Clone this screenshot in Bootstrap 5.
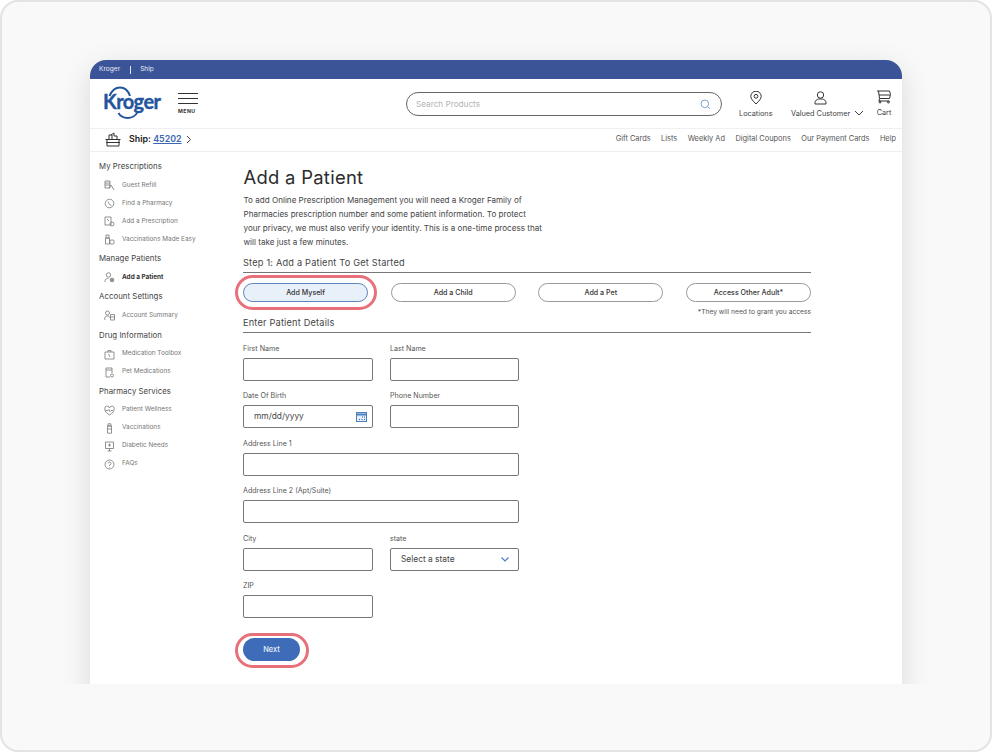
<!doctype html>
<html lang="en">
<head>
<meta charset="utf-8">
<title>Add a Patient</title>
<link href="https://cdn.jsdelivr.net/npm/bootstrap@5.3.0/dist/css/bootstrap.min.css" rel="stylesheet">
<style>
html,body{margin:0;width:992px;height:752px;overflow:hidden;background:#fff}
body{font-family:Inter,"Liberation Sans",sans-serif;color:#333}
.stage{height:752px;background:#f9f9f9;border:2px solid #e3e3e3;border-radius:18px;overflow:hidden}
.clipper{height:682px;overflow:hidden;padding:58px 88px 0}
.panel{width:812px;height:640px;background:#fff;border-radius:16px 16px 0 0;box-shadow:0 8px 30px rgba(0,0,0,.13)}
.topstrip{height:19px;background:#3a5497;border-radius:16px 16px 0 0;color:#e8edf7;font-size:6.6px;padding:1px 0 0 9px}
.topstrip .sep{width:1px;height:8px;background:#dfe6f5;margin:0 9px 0 10px}
.mainhead{height:50px;border-bottom:1px solid #f0f0f0;position:relative}
.logo-slot{margin-left:13px;width:60px;height:36px}
.logoword{stroke:#24559c;stroke-width:.35px}
.burger{margin-left:15px;width:20px}
.burger i{display:block;height:1.4px;background:#333;margin-bottom:3.8px}
.burger span{display:block;font-size:5.2px;font-weight:700;line-height:6px;color:#333;letter-spacing:.45px;margin-top:1px}
.searchbox{position:absolute;left:316px;top:13px;width:316px;height:24px;border:1px solid #666;border-radius:12px;padding:0 10px 0 9px;font-size:8.2px;color:#b4b4b4}
.tool{position:absolute;top:12px;text-align:center;font-size:7.3px;color:#444;line-height:10px;white-space:nowrap}
.tool svg.glyph{display:block;margin:0 auto 4px}
.toolmenu{position:absolute;left:calc(100% + 4px);top:19px}
.subhead{height:23px;border-bottom:1px solid #eee;padding:0 6px 2px 15px}
.shipto{font-size:8.9px;font-weight:600;color:#222;margin-left:8px}
.shipto a{color:#3c68b3;font-weight:600}
.quick{gap:10.5px;font-size:7.4px;color:#555}
.bodyrow{padding-left:9px}
.sidecol{width:144px;padding-top:8px}
.sidehead{font-size:7.8px;line-height:12px;color:#444;margin-bottom:4.5px;letter-spacing:.05px}
.sideitem{height:18px;font-size:6.4px;color:#777;padding-left:5px;gap:7px}
.sideitem svg{flex:none}
.sideitem.on{font-weight:700;color:#333}
.sidegroup{margin-bottom:3.7px}
.maincol{width:568px}
.pagetitle{font-size:18.4px;font-weight:400;color:#2c2c2c;line-height:24px;margin:13px 0 4px .5px;letter-spacing:.3px}
.intro{font-size:8.1px;line-height:14px;color:#444;width:300px;margin:0 0 7px .5px}
.stephead{font-size:9.2px;line-height:14px;color:#444;padding-bottom:2px;border-bottom:1px solid #777;letter-spacing:.2px}
.choices{margin-top:10px}
.pickbtn{width:125px;height:19px;padding:0;font-size:7.1px;font-weight:500;line-height:17px;color:#333;background:#fff;border:1px solid #999;border-radius:10px}
.pickbtn.sel{background:#e8f0fa;border-color:#5d84bd;position:relative}
.pickbtn.sel::after{content:"";position:absolute;inset:-9px -10px -9px -9px;border:3.5px solid #e8707a;border-radius:18px}
.grantnote{font-size:6.7px;line-height:10px;color:#555;text-align:right;margin-top:5px}
.detailhead{margin-top:-1px;margin-bottom:11px}
.fieldlabel{display:block;font-size:7.1px;line-height:10px;color:#555;margin:0 0 4px}
.fieldrow{gap:17px;margin-bottom:10.4px}
.fieldbox{width:130px}
.fieldbox.wide{width:276px}
.fieldbox.alt{width:129px}
.inputline{display:block;width:100%;height:23px;border:1px solid #777;border-radius:2px;padding:0 5px 0 10px;font-size:8.4px;line-height:21px;background:#fff;color:#444}
.nextbtn{position:relative;width:57px;height:23px;padding:0;margin-top:10px;background:#3e6cb8;color:#e9effa;border:0;border-radius:12px;font-size:7.4px;font-weight:500}
.nextbtn::after{content:"";position:absolute;inset:-5px -9px -7px -8px;border:3.5px solid #e8707a;border-radius:18px}
</style>
</head>
<body>
<div class="stage"><div class="clipper"><div class="panel">

<div class="topstrip d-flex align-items-center"><span>Kroger</span><span class="sep"></span><span>Ship</span></div>

<div class="mainhead d-flex align-items-center">
  <div class="logo-slot">
    <svg width="60" height="36" viewBox="0 0 60 36">
      <text class="logoword" x="0" y="23" font-family="Lato,sans-serif" font-weight="700" font-size="20" fill="#24559c" textLength="58">Kroger</text>
      <path d="M6.500 10C9 4 13 1.500 17 1.500S25 4 27 10" fill="none" stroke="#24559c" stroke-width="2"/>
      <path d="M35 25C33 30 28 32 24.500 32S17 30 15.500 27" fill="none" stroke="#24559c" stroke-width="2"/>
    </svg>
  </div>
  <div class="burger"><i></i><i></i><i></i><span>MENU</span></div>
  <div class="searchbox d-flex align-items-center justify-content-between"><span>Search Products</span>
    <svg width="11" height="11" viewBox="0 0 11 11" fill="none" stroke="#7fa3d2" stroke-width="1"><circle cx="4.800" cy="4.800" r="3.800"/><path d="M7.600 7.600 10 10"/></svg>
  </div>
  <div class="tool" style="left:649px">
    <svg class="glyph" width="12" height="14" viewBox="0 0 12 14" fill="none" stroke="#333" stroke-width="1"><path d="M6 13C3 10 .8 7.800.8 5.400a5.200 5.200 0 0 1 10.400 0C11.200 7.800 9 10 6 13Z"/><circle cx="6" cy="5.300" r="1.900"/></svg>
    Locations
  </div>
  <div class="tool" style="left:701px">
    <svg class="glyph" width="13" height="14" viewBox="0 0 13 14" fill="none" stroke="#333" stroke-width="1"><circle cx="6.500" cy="4" r="3.200"/><path d="M1 13v-1.500C1 9.500 3 8.500 4.500 8h4c1.500.5 3.500 1.500 3.500 3.500V13Z"/></svg>
    Valued Customer
    <svg class="toolmenu" width="10" height="6" viewBox="0 0 10 6" fill="none" stroke="#444" stroke-width="1"><path d="M1 1l4 4 4-4"/></svg>
  </div>
  <div class="tool" style="left:786px;top:11px">
    <svg class="glyph" width="16" height="14" viewBox="0 0 16 14" fill="none" stroke="#333" stroke-width="1"><path d="M1 1h12.500l1 3.500-1 4H3.500L2.500 1"/><path d="M3 5h11"/><path d="M3.500 8.500 3 11h10"/><circle cx="4" cy="12" r="1"/><circle cx="12.500" cy="12" r="1"/></svg>
    Cart
  </div>
</div>

<div class="subhead d-flex align-items-center justify-content-between">
  <div class="d-flex align-items-center">
    <svg width="16" height="15" viewBox="0 0 16 15" fill="none" stroke="#333" stroke-width="1"><path d="M.5 7.500h15M2 7.500V14h12V7.500M1 10.500h14"/><path d="M4 7V3h3v4M6 3 9 1v3h3v3"/></svg>
    <span class="shipto">Ship: <a href="#">45202</a></span>
    <svg class="ms-1" width="6" height="9" viewBox="0 0 6 9" fill="none" stroke="#444" stroke-width="1"><path d="M1 1l3.500 3.500L1 8"/></svg>
  </div>
  <div class="quick d-flex"><span>Gift Cards</span><span>Lists</span><span>Weekly Ad</span><span>Digital Coupons</span><span>Our Payment Cards</span><span>Help</span></div>
</div>

<div class="bodyrow d-flex">
  <nav class="sidecol">
    <div class="sidegroup">
      <div class="sidehead">My Prescriptions</div>
      <div class="sideitem d-flex align-items-center"><svg width="11" height="11" viewBox="0 0 11 11" fill="none" stroke="#777" stroke-width=".8"><path d="M1 1h5v7H1ZM1 3h5M1 5h5"/><path d="M5 8l2-3 3 5"/></svg>Guest Refill</div>
      <div class="sideitem d-flex align-items-center"><svg width="11" height="11" viewBox="0 0 11 11" fill="none" stroke="#777" stroke-width=".8"><circle cx="5.500" cy="5.500" r="4.300"/><path d="M4 3.500l1.500 3 2 1"/></svg>Find a Pharmacy</div>
      <div class="sideitem d-flex align-items-center"><svg width="11" height="11" viewBox="0 0 11 11" fill="none" stroke="#777" stroke-width=".8"><path d="M1 1h6v8H1ZM3 3l2 2"/><circle cx="8" cy="8" r="2"/></svg>Add a Prescription</div>
      <div class="sideitem d-flex align-items-center"><svg width="11" height="11" viewBox="0 0 11 11" fill="none" stroke="#777" stroke-width=".8"><path d="M2 1h3v3H2ZM1.500 4h4v6h-4Z"/><rect x="6" y="6" width="4" height="4" rx="1"/></svg>Vaccinations Made Easy</div>
    </div>
    <div class="sidegroup">
      <div class="sidehead">Manage Patients</div>
      <div class="sideitem on d-flex align-items-center"><svg width="11" height="11" viewBox="0 0 11 11" fill="none" stroke="#777" stroke-width=".8"><circle cx="4.500" cy="3" r="2.200"/><path d="M1 10V8.500C1 7 3 6.500 4.500 6.500"/><circle cx="8" cy="8" r="1.800" fill="#999"/></svg>Add a Patient</div>
    </div>
    <div class="sidegroup">
      <div class="sidehead">Account Settings</div>
      <div class="sideitem d-flex align-items-center"><svg width="11" height="11" viewBox="0 0 11 11" fill="none" stroke="#777" stroke-width=".8"><circle cx="3.500" cy="3" r="2"/><path d="M.800 10V8C.800 7 2 6 3.500 6S6 7 6 8"/><path d="M6.500 4.500h4v5.500h-4ZM6.500 7h4"/></svg>Account Summary</div>
    </div>
    <div class="sidegroup">
      <div class="sidehead">Drug Information</div>
      <div class="sideitem d-flex align-items-center"><svg width="11" height="11" viewBox="0 0 11 11" fill="none" stroke="#777" stroke-width=".8"><path d="M1 3h9v7H1ZM4 3V1.500h3V3M4.500 5l1.500 3"/></svg>Medication Toolbox</div>
      <div class="sideitem d-flex align-items-center"><svg width="11" height="11" viewBox="0 0 11 11" fill="none" stroke="#777" stroke-width=".8"><path d="M2 1h6v2H2ZM2 3v7h4M8 3v3"/><circle cx="8" cy="8.500" r="1.500"/></svg>Pet Medications</div>
    </div>
    <div class="sidegroup">
      <div class="sidehead">Pharmacy Services</div>
      <div class="sideitem d-flex align-items-center"><svg width="11" height="11" viewBox="0 0 11 11" fill="none" stroke="#777" stroke-width=".8"><path d="M5.500 10C2 8 .8 6 .8 4a2.400 2.400 0 0 1 4.700-1 2.400 2.400 0 0 1 4.700 1c0 2-1.200 4-4.700 6Z"/><path d="M1.500 5.500h2.500l1-1 1 2 1-1h2"/></svg>Patient Wellness</div>
      <div class="sideitem d-flex align-items-center"><svg width="11" height="11" viewBox="0 0 11 11" fill="none" stroke="#777" stroke-width=".8"><path d="M4 .8h3V3H4ZM3.500 3h4v7.200h-4ZM3.500 6h4"/></svg>Vaccinations</div>
      <div class="sideitem d-flex align-items-center"><svg width="11" height="11" viewBox="0 0 11 11" fill="none" stroke="#777" stroke-width=".8"><path d="M1.500 1h8v6.500h-8ZM3.500 10h4M5.500 7.500V10M5.500 2.500v3M4 4h3"/></svg>Diabetic Needs</div>
      <div class="sideitem d-flex align-items-center"><svg width="11" height="11" viewBox="0 0 11 11" fill="none" stroke="#777" stroke-width=".8"><circle cx="5.500" cy="5.500" r="4.500"/><path d="M4 4.300a1.500 1.500 0 1 1 1.500 1.700v1M5.500 8v.6"/></svg>FAQs</div>
    </div>
  </nav>

  <main class="maincol">
    <h1 class="pagetitle">Add a Patient</h1>
    <p class="intro">To add Online Prescription Management you will need a Kroger Family of<br>Pharmacies prescription number and some patient information. To protect<br>your privacy, we must also verify your identity. This is a one-time process that<br>will take just a few minutes.</p>
    <div class="stephead">Step 1: Add a Patient To Get Started</div>
    <div class="choices d-flex justify-content-between">
      <button class="btn pickbtn sel" type="button">Add Myself</button>
      <button class="btn pickbtn" type="button">Add a Child</button>
      <button class="btn pickbtn" type="button">Add a Pet</button>
      <button class="btn pickbtn" type="button">Access Other Adult*</button>
    </div>
    <div class="grantnote">*They will need to grant you access</div>
    <div class="stephead detailhead">Enter Patient Details</div>
    <form>
      <div class="fieldrow d-flex">
        <div class="fieldbox"><label class="fieldlabel">First Name</label><input class="inputline" type="text"></div>
        <div class="fieldbox alt"><label class="fieldlabel">Last Name</label><input class="inputline" type="text"></div>
      </div>
      <div class="fieldrow d-flex">
        <div class="fieldbox"><label class="fieldlabel">Date Of Birth</label>
          <div class="inputline d-flex align-items-center justify-content-between"><span>mm/dd/yyyy</span>
            <svg width="11" height="10" viewBox="0 0 11 10"><rect x=".5" y=".5" width="10" height="9" fill="#e4eef8" stroke="#4a7fc0"/><path d="M.5 2.500h10" stroke="#4a7fc0" stroke-width="2"/><path d="M6 5h1M8 5h1M3 7.500h1M5.500 7.500h1M8 7.500h1" stroke="#2f5f9f" stroke-width="1.200"/></svg>
          </div>
        </div>
        <div class="fieldbox alt"><label class="fieldlabel">Phone Number</label><input class="inputline" type="text"></div>
      </div>
      <div class="fieldrow d-flex"><div class="fieldbox wide"><label class="fieldlabel">Address Line 1</label><input class="inputline" type="text"></div></div>
      <div class="fieldrow d-flex"><div class="fieldbox wide"><label class="fieldlabel">Address Line 2 (Apt/Suite)</label><input class="inputline" type="text"></div></div>
      <div class="fieldrow d-flex">
        <div class="fieldbox"><label class="fieldlabel">City</label><input class="inputline" type="text"></div>
        <div class="fieldbox alt"><label class="fieldlabel">state</label>
          <div class="inputline d-flex align-items-center justify-content-between"><span>Select a state</span>
            <svg class="me-1" width="8" height="5" viewBox="0 0 8 5" fill="none" stroke="#4a7fc0" stroke-width="1.200"><path d="M.5.500 4 4 7.500.5"/></svg>
          </div>
        </div>
      </div>
      <div class="fieldrow d-flex"><div class="fieldbox"><label class="fieldlabel">ZIP</label><input class="inputline" type="text"></div></div>
      <button class="btn nextbtn" type="button">Next</button>
    </form>
  </main>
</div>

</div></div></div>
<script src="https://cdn.jsdelivr.net/npm/bootstrap@5.3.0/dist/js/bootstrap.bundle.min.js"></script>
</body>
</html>
